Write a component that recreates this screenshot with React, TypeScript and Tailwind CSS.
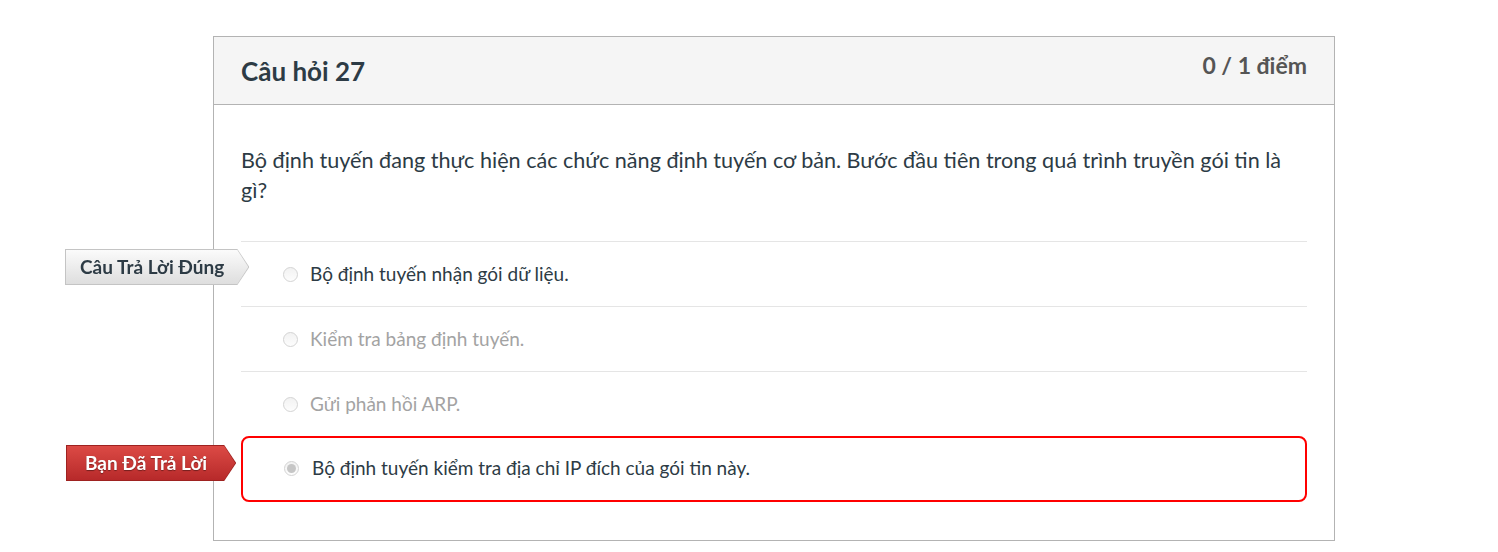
import React from 'react';

type Answer = { text: string; state: 'correct' | 'muted' | 'chosen' };

const answers: Answer[] = [
  { text: 'Bộ định tuyến nhận gói dữ liệu.', state: 'correct' },
  { text: 'Kiểm tra bảng định tuyến.', state: 'muted' },
  { text: 'Gửi phản hồi ARP.', state: 'muted' },
  { text: 'Bộ định tuyến kiểm tra địa chỉ IP đích của gói tin này.', state: 'chosen' },
];

function Flag({ tone, children }: { tone: 'gray' | 'red'; children: React.ReactNode }) {
  const shape = '[clip-path:polygon(0_0,calc(100%-12px)_0,100%_50%,calc(100%-12px)_100%,0_100%)]';
  return (
    <div
      className={
        tone === 'gray'
          ? `relative h-[36px] bg-[#c4c4c4] ${shape} drop-shadow-[0_1px_1px_rgba(0,0,0,0.15)]`
          : `relative h-[36px] bg-[#9e2220] ${shape} drop-shadow-[0_1px_1px_rgba(0,0,0,0.2)]`
      }
    >
      <div
        className={
          tone === 'gray'
            ? 'absolute inset-[1px] bg-gradient-to-b from-[#fbfbfb] to-[#dedede] [clip-path:polygon(0_0,calc(100%-11px)_0,100%_50%,calc(100%-11px)_100%,0_100%)]'
            : 'absolute inset-[1px] bg-gradient-to-b from-[#dc4a45] to-[#b7292a] [clip-path:polygon(0_0,calc(100%-11px)_0,100%_50%,calc(100%-11px)_100%,0_100%)]'
        }
      />
      <span
        className={
          tone === 'gray'
            ? 'relative flex h-full items-center pl-[15px] pr-[25px] text-[19px] font-bold text-[#2d3b45]'
            : 'relative flex h-full items-center pl-[19px] pr-[29px] text-[19px] font-bold text-white [text-shadow:0_1px_1px_rgba(0,0,0,0.4)]'
        }
      >
        {children}
      </span>
    </div>
  );
}

function Radio({ checked }: { checked?: boolean }) {
  return (
    <span className="flex h-[15px] w-[15px] shrink-0 items-center justify-center rounded-full border border-[#d4d4d4] bg-gradient-to-b from-[#f2f2f2] to-[#fdfdfd]">
      {checked && <span className="h-[9px] w-[9px] rounded-full bg-[#c6c6c6]" />}
    </span>
  );
}

export default function App() {
  return (
    <div className="min-h-screen bg-white pt-[36px] font-['Lato','Noto_Sans',sans-serif]">
      <div className="ml-[213px] w-[1122px] border border-[#b3b3b3]">
        <div className="flex h-[68px] items-start justify-between border-b border-[#b3b3b3] bg-[#f5f5f5] px-[27px]">
          <h2 className="mt-[15px] text-[26px] font-bold text-[#2d3b45]">Câu hỏi 27</h2>
          <span className="mt-[11px] text-[23px] font-bold text-[#555]">0 / 1 điểm</span>
        </div>
        <div className="px-[27px] pt-[40px] pb-[38px]">
          <p className="text-[21.6px] leading-[30px] text-[#2d3b45]">
            Bộ định tuyến đang thực hiện các chức năng định tuyến cơ bản. Bước đầu tiên trong quá trình truyền gói tin là gì?
          </p>
          <div className="mt-[36px]">
            {answers.map((a, i) => (
              <div
                key={i}
                className={
                  a.state === 'chosen'
                    ? 'relative flex h-[66px] items-center gap-[13px] rounded-[8px] border-2 border-[#ff0000] pl-[41px] pb-[2px]'
                    : 'relative flex h-[65px] items-center gap-[12px] border-t border-[#e5e5e5] pl-[42px]'
                }
              >
                {a.state === 'correct' && (
                  <div className="absolute left-[-176px] top-[7px] z-10">
                    <Flag tone="gray">Câu Trả Lời Đúng</Flag>
                  </div>
                )}
                {a.state === 'chosen' && (
                  <div className="absolute left-[-177px] top-[7px] z-10">
                    <Flag tone="red">Bạn Đã Trả Lời</Flag>
                  </div>
                )}
                <Radio checked={a.state === 'chosen'} />
                <span
                  className={
                    a.state === 'muted'
                      ? 'text-[19px] text-[#a3a3a3]'
                      : 'text-[19px] text-[#2d3b45]'
                  }
                >
                  {a.text}
                </span>
              </div>
            ))}
          </div>
        </div>
      </div>
    </div>
  );
}
